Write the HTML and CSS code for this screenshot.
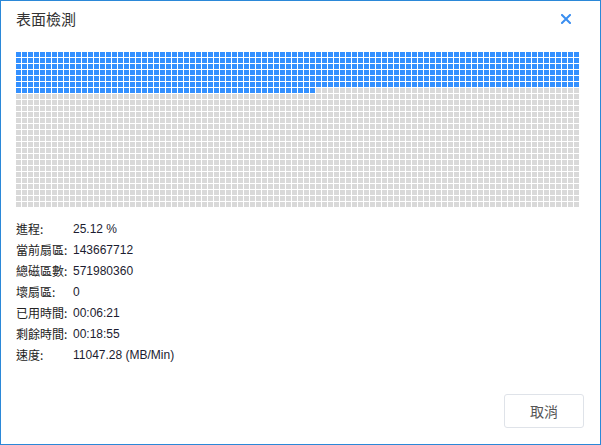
FILE: index.html
```html
<!DOCTYPE html>
<html lang="zh-Hant">
<head>
<meta charset="utf-8">
<title>表面檢測</title>
<link rel="stylesheet" href="styles.css">
</head>
<body>
<div class="window">
  <div class="header">
    <div class="title">表面檢測</div>
    <button class="close" aria-label="關閉">
      <svg width="10" height="10" viewBox="0 0 10 10"><path d="M1 1 L9 9 M9 1 L1 9" stroke="#3a8ef0" stroke-width="2" stroke-linecap="square" fill="none"/></svg>
    </button>
  </div>
  <div class="grid" id="grid"></div>
  <div class="info">
    <div class="row"><span class="label">進程:</span><span class="value">25.12 %</span></div>
    <div class="row"><span class="label">當前扇區:</span><span class="value">143667712</span></div>
    <div class="row"><span class="label">總磁區數:</span><span class="value">571980360</span></div>
    <div class="row"><span class="label">壞扇區:</span><span class="value">0</span></div>
    <div class="row"><span class="label">已用時間:</span><span class="value">00:06:21</span></div>
    <div class="row"><span class="label">剩餘時間:</span><span class="value">00:18:55</span></div>
    <div class="row"><span class="label">速度:</span><span class="value">11047.28 (MB/Min)</span></div>
  </div>
  <div class="footer">
    <button class="cancel">取消</button>
  </div>
</div>
<script src="script.js"></script>
</body>
</html>
```

FILE: styles.css
```css
* { box-sizing: border-box; }
html, body { margin: 0; padding: 0; background: #fff; }
body { font-family: "Noto Sans", "Noto Sans CJK TC", sans-serif; }
.window {
  width: 601px;
  height: 445px;
  border: 1px solid #2b88d8;
  display: flex;
  flex-direction: column;
  background: #fff;
}
.header {
  height: 36px;
  display: flex;
  align-items: center;
  justify-content: space-between;
  padding: 0 29px 0 15px;
}
.title {
  font-family: "Noto Sans CJK TC", sans-serif;
  font-size: 15px;
  color: #333;
  line-height: 20px;
}
.close {
  border: 0;
  background: none;
  padding: 0;
  width: 10px;
  height: 10px;
  display: flex;
}
.grid {
  margin: 15px 0 0 15px;
  display: grid;
  grid-template-columns: repeat(94, 5px);
  grid-auto-rows: 5px;
  gap: 1px;
  width: max-content;
}
.cell { background: #d9d9d9; }
.cell.done { background: #3390ff; }
.info {
  margin-top: 11px;
  padding-left: 15px;
  display: flex;
  flex-direction: column;
}
.row {
  display: flex;
  height: 21px;
  align-items: center;
  color: #222;
}
.label {
  width: 57px;
  font-family: "Noto Sans CJK TC", sans-serif;
  font-size: 12px;
}
.value {
  font-family: "Liberation Sans", "Noto Sans CJK TC", sans-serif;
  font-size: 12px;
  color: #1c1c30;
}
.footer {
  margin-top: auto;
  display: flex;
  justify-content: flex-end;
  padding: 0 16px 16px 0;
}
.cancel {
  width: 80px;
  height: 34px;
  border: 1px solid #dfe3e9;
  border-radius: 3px;
  background: #fff;
  font-family: "Noto Sans CJK TC", sans-serif;
  font-size: 14px;
  color: #555;
}
```

FILE: script.js
```js
(function () {
  var grid = document.getElementById('grid');
  var total = 94 * 26;
  var done = Math.round(total * 0.2512);
  var frag = document.createDocumentFragment();
  for (var i = 0; i < total; i++) {
    var d = document.createElement('div');
    d.className = i < done ? 'cell done' : 'cell';
    frag.appendChild(d);
  }
  grid.appendChild(frag);
})();
```
